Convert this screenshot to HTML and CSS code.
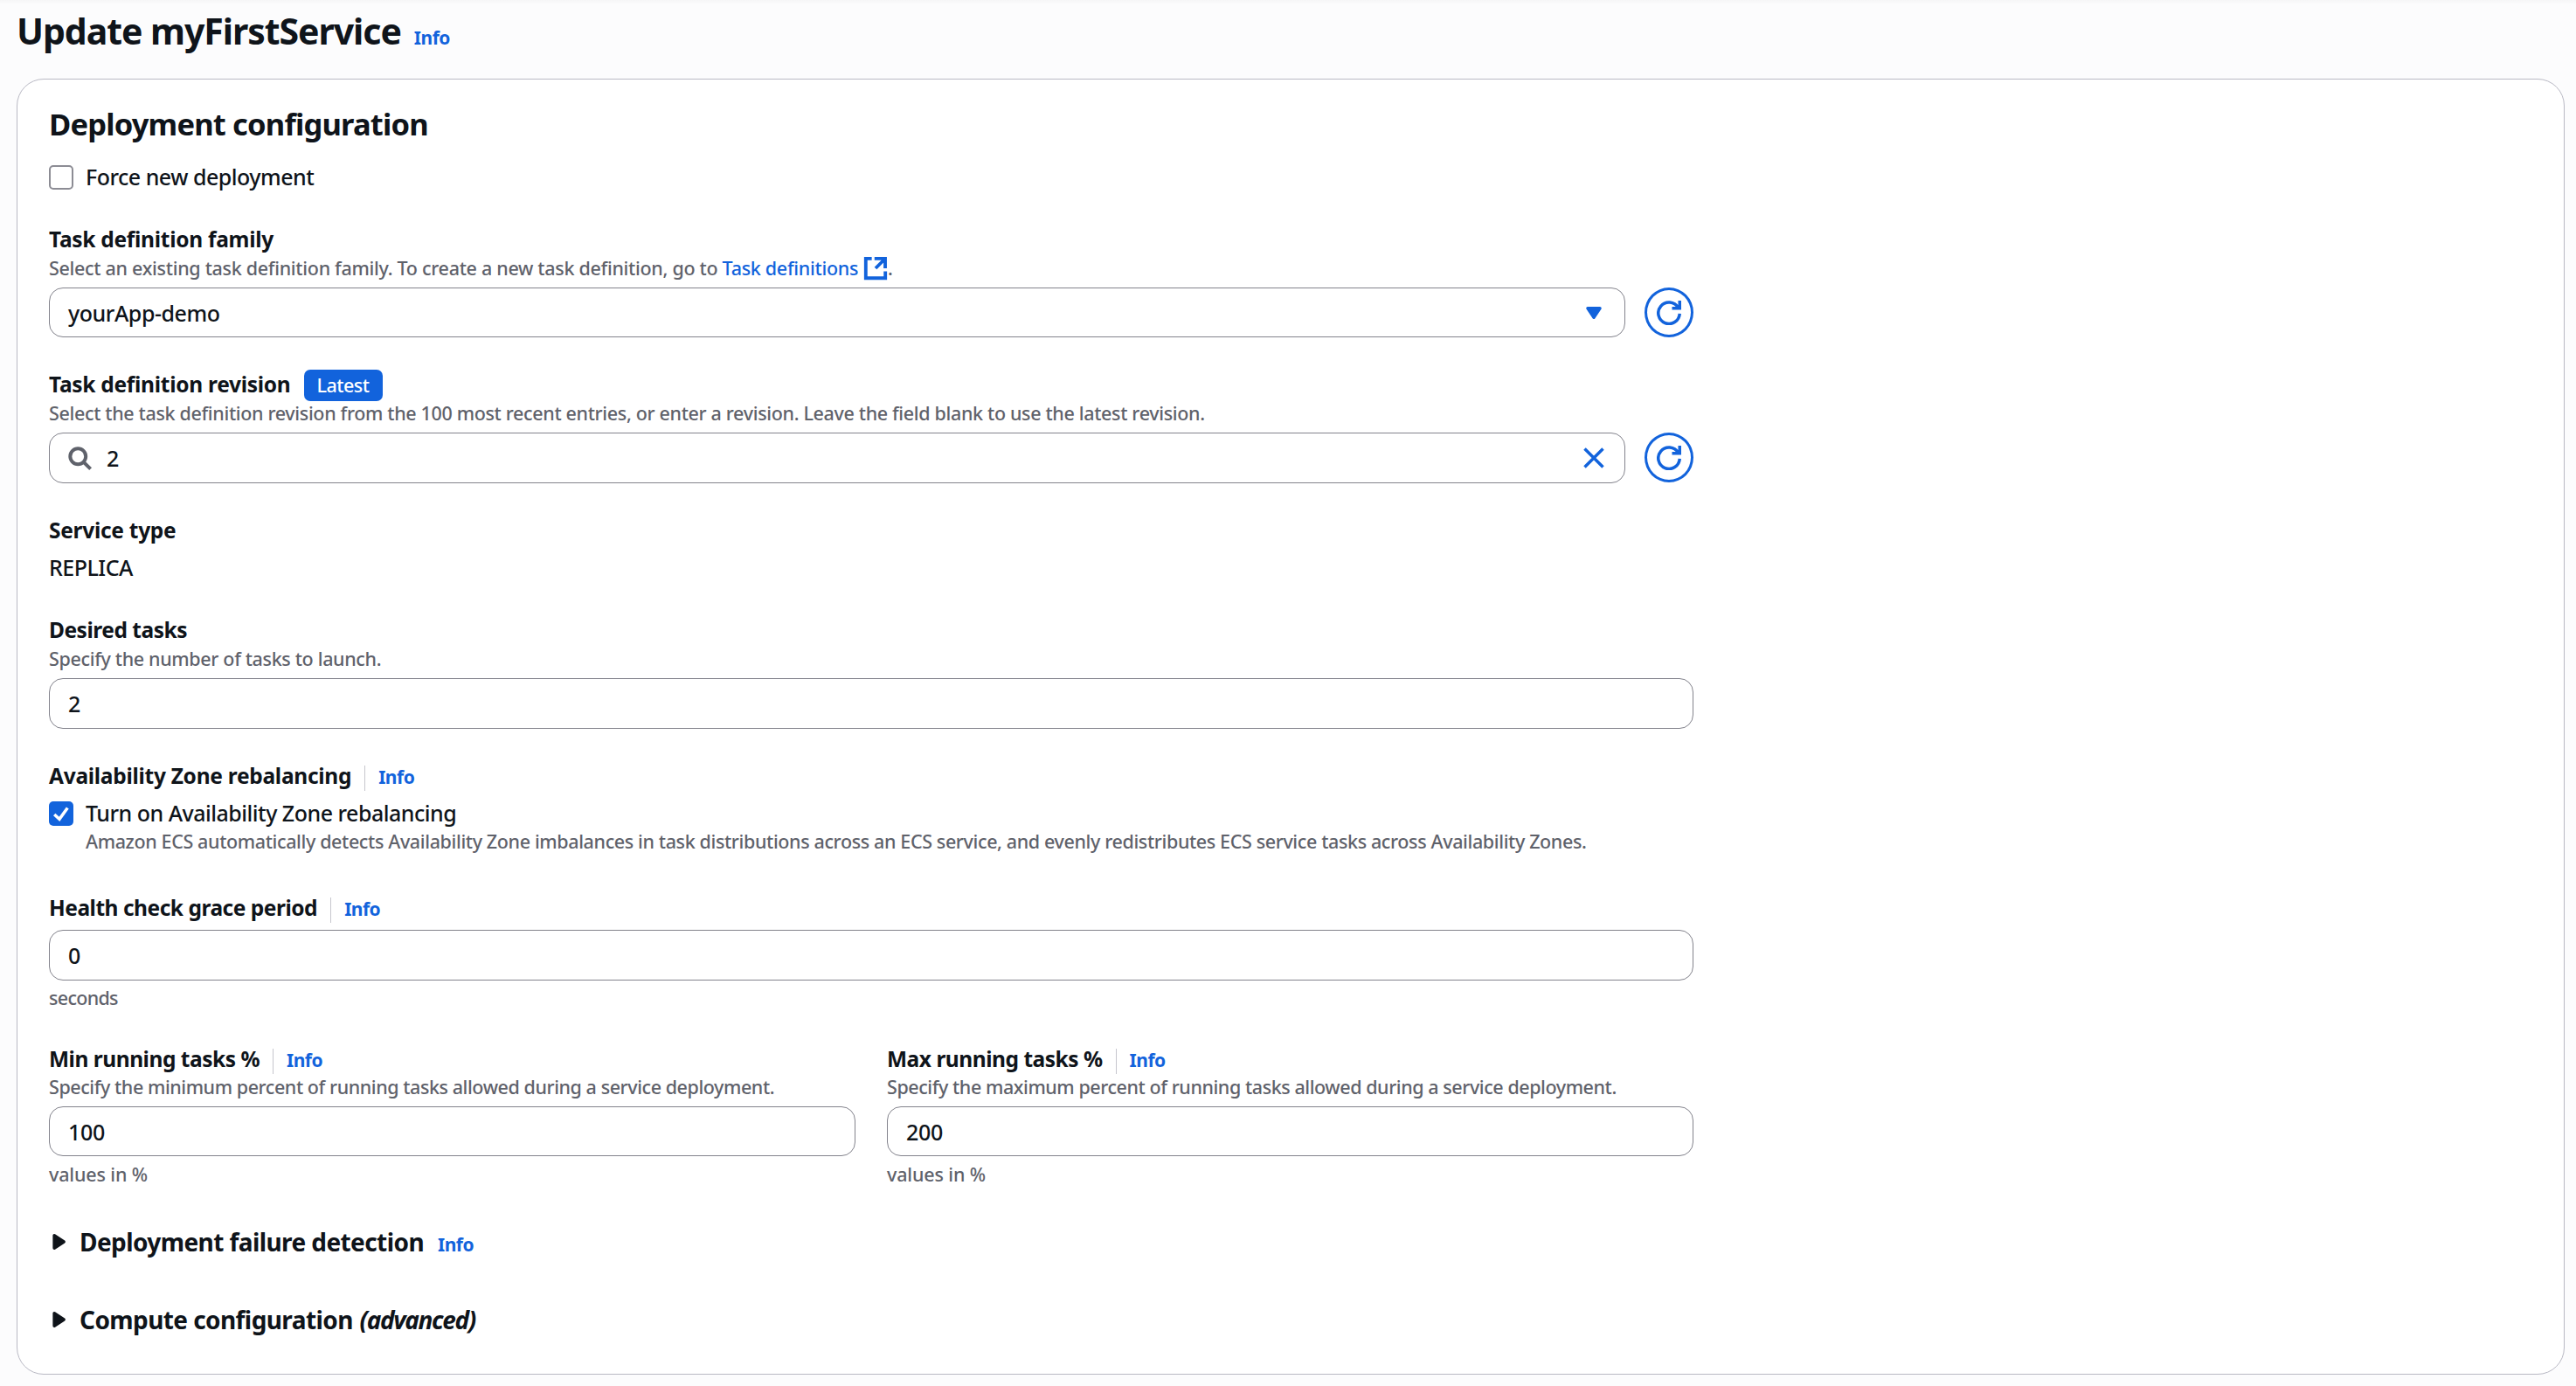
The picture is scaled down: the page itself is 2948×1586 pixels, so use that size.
FILE: index.html
```html
<!DOCTYPE html>
<html lang="en">
<head>
<meta charset="utf-8">
<title>Update myFirstService</title>
<link rel="stylesheet" href="styles.css">
</head>
<body>
<svg class="sprite" aria-hidden="true">
  <symbol id="refresh" viewBox="0 0 16 16"><path d="M10 5h5V0M15 8.5A7 7 0 1 1 14 4.5" /></symbol>
  <symbol id="arrow" viewBox="0 0 16 16"><path class="solid" d="M3.5 3.9v8.2l6.3-4.1z"/></symbol>
</svg>
<header class="page-header">
  <h1>Update myFirstService</h1>
  <a class="info">Info</a>
</header>
<main class="card">
  <h2>Deployment configuration</h2>
  <div class="check-row force"><span class="checkbox"></span><span class="text">Force new deployment</span></div>

  <section class="group family">
    <div class="label">Task definition family</div>
    <div class="hint">Select an existing task definition family. To create a new task definition, go to <a class="link">Task definitions</a><svg class="icon external" viewBox="0 0 16 16"><path d="M5.5 1.6H1.6v12.8h12.8V10M7.3 1.6h7v6.4M14 2L8 8"/></svg>.</div>
    <div class="field-row">
      <div class="field short"><span class="value name">yourApp-demo</span><svg class="icon caret" viewBox="0 0 16 16"><path class="solid" d="M4 5h8l-4 6z"/></svg></div>
      <button class="refresh"><svg class="icon"><use href="#refresh"/></svg></button>
    </div>
  </section>

  <section class="group revision">
    <div class="label">Task definition revision<span class="badge">Latest</span></div>
    <div class="hint">Select the task definition revision from the 100 most recent entries, or enter a revision. Leave the field blank to use the latest revision.</div>
    <div class="field-row">
      <div class="field search"><svg class="icon lens" viewBox="0 0 16 16"><circle cx="7" cy="7" r="5.1"/><path d="M10.6 10.6L15.2 15.2"/></svg><span class="value">2</span><svg class="icon clear" viewBox="0 0 16 16"><path d="M2 2l12 12M14 2L2 14"/></svg></div>
      <button class="refresh"><svg class="icon"><use href="#refresh"/></svg></button>
    </div>
  </section>

  <section class="group service">
    <div class="label">Service type</div>
    <div class="text plain">REPLICA</div>
  </section>

  <section class="group desired">
    <div class="label">Desired tasks</div>
    <div class="hint">Specify the number of tasks to launch.</div>
    <div class="field"><span class="value">2</span></div>
  </section>

  <section class="group zones">
    <div class="label">Availability Zone rebalancing<a class="info divided">Info</a></div>
    <div class="check-row"><span class="checkbox checked"><svg viewBox="0 0 28 28"><path d="M6.2 15L12 20.3L21.3 7.4"/></svg></span><span class="text">Turn on Availability Zone rebalancing</span></div>
    <div class="hint indented">Amazon ECS automatically detects Availability Zone imbalances in task distributions across an ECS service, and evenly redistributes ECS service tasks across Availability Zones.</div>
  </section>

  <section class="group health">
    <div class="label">Health check grace period<a class="info divided">Info</a></div>
    <div class="field"><span class="value">0</span></div>
    <div class="hint below">seconds</div>
  </section>

  <div class="columns">
    <section class="percent">
      <div class="label">Min running tasks %<a class="info divided">Info</a></div>
      <div class="hint">Specify the minimum percent of running tasks allowed during a service deployment.</div>
      <div class="field short"><span class="value">100</span></div>
      <div class="hint below">values in %</div>
    </section>
    <section class="percent">
      <div class="label">Max running tasks %<a class="info divided">Info</a></div>
      <div class="hint">Specify the maximum percent of running tasks allowed during a service deployment.</div>
      <div class="field short"><span class="value">200</span></div>
      <div class="hint below">values in %</div>
    </section>
  </div>

  <div class="expander failure"><svg class="icon"><use href="#arrow"/></svg><h3>Deployment failure detection</h3><a class="info">Info</a></div>
  <div class="expander compute"><svg class="icon"><use href="#arrow"/></svg><h3>Compute configuration <em>(advanced)</em></h3></div>
</main>
</body>
</html>
```

FILE: styles.css
```css
:root {
  --ink: #0f141a;
  --muted: #5f626b;
  --blue: #1263dc;
  --border: #83838c;
}
* { box-sizing: border-box; }
body {
  margin: 0;
  height: 1586px;
  background: #fcfcfd;
  color: var(--ink);
  font-family: "Noto Sans", "Open Sans", sans-serif;
  overflow: hidden;
}
h1, h2, h3 { margin: 0; font-weight: 700; white-space: nowrap; }
.sprite { display: none; }

.page-header {
  display: flex;
  align-items: baseline;
  height: 90px;
  padding: 5px 19px 0;
  background: linear-gradient(#f6f6f7, #fcfcfd 5px);
}
h1 { font-size: 41px; line-height: 60px; letter-spacing: -1.05px; }
.page-header .info { margin-left: 15px; }
.info {
  color: var(--blue);
  font-size: 21px;
  font-weight: 700;
  letter-spacing: -0.5px;
}

.card {
  width: 2916px;
  height: 1483px;
  margin-left: 19px;
  padding: 27px 36px 0;
  border: 1px solid #b9b9c4;
  border-radius: 31px;
  background: #fff;
}
h2 { font-size: 34.5px; line-height: 48px; letter-spacing: -0.82px; }

.group, .columns { width: 1882px; }
.label {
  display: flex;
  align-items: baseline;
  height: 32px;
  font-size: 24.5px;
  font-weight: 700;
  line-height: 32px;
  letter-spacing: -0.28px;
  white-space: nowrap;
}
.health .label, .percent .label, .desired .label { letter-spacing: -0.48px; }
.info.divided {
  height: 29px;
  margin-left: 15px;
  padding-left: 15px;
  border-left: 1px solid #c6c6cd;
  line-height: 26px;
}
.badge {
  height: 36px;
  margin: -1px 0 -3px 15px;
  padding: 0 15px;
  border-radius: 7px;
  background: var(--blue);
  color: #fff;
  font-size: 21.5px;
  font-weight: 500;
  line-height: 36px;
  letter-spacing: -0.5px;
}
.hint {
  color: var(--muted);
  font-size: 21.5px;
  font-weight: 500;
  line-height: 34px;
  height: 34px;
  letter-spacing: -0.34px;
  white-space: nowrap;
}
.hint + .field, .hint + .field-row { margin-top: 5px; }
.family .hint { letter-spacing: -0.3px; }
.hint.indented { margin: -1px 0 0 42px; letter-spacing: -0.375px; }
.link { color: var(--blue); }

.icon {
  width: 28px;
  height: 28px;
  flex: none;
  overflow: visible;
  fill: none;
  stroke: currentColor;
  stroke-width: 2;
}
.solid { fill: currentColor; stroke-linejoin: round; }
.icon.external {
  margin: 0 0 0 6px;
  vertical-align: -6px;
  color: var(--blue);
  stroke-width: 2.2;
}

.field-row { display: flex; gap: 22px; }
.field-row .field { width: 1804px; }
.field {
  display: flex;
  align-items: center;
  height: 58px;
  padding: 0 21px;
  border: 1px solid var(--border);
  border-radius: 16px;
  background: #fff;
}
.field.short { height: 57px; }
.value, .text {
  font-size: 25px;
  font-weight: 500;
  line-height: 34px;
  letter-spacing: -0.5px;
  white-space: nowrap;
}
.value { flex: 1; letter-spacing: -0.3px; }
.value.name { letter-spacing: -0.45px; }
.caret, .clear { color: var(--blue); }
.lens {
  margin: 0 17px 0 -1px;
  color: var(--muted);
  stroke-width: 2.3;
}
.refresh {
  display: grid;
  place-items: center;
  width: 56px;
  height: 57px;
  padding: 0;
  border: 3px solid var(--blue);
  border-radius: 50%;
  background: #fff;
  color: var(--blue);
}

.check-row { display: flex; gap: 14px; }
.checkbox {
  width: 28px;
  height: 28px;
  margin-top: 4px;
  border: 2px solid #8c8c94;
  border-radius: 5px;
}
.checkbox.checked { border: 0; background: var(--blue); }
.checked svg { display: block; fill: none; stroke: #fff; stroke-width: 3.5; }

.force { margin-top: 19px; }
.family { margin-top: 39px; }
.revision, .service, .zones { margin-top: 38px; }
.service .plain { margin-top: 9px; }
.desired { margin-top: 39px; }
.zones .check-row { margin-top: 9px; }
.health { margin-top: 43px; }
.health .field { margin-top: 9px; }
.health .below { margin-top: 3px; letter-spacing: -0.7px; }

.columns {
  display: grid;
  grid-template-columns: 1fr 1fr;
  gap: 36px;
  margin-top: 37px;
}
.percent .label + .hint { margin-top: -1px; letter-spacing: -0.43px; }
.percent .below { margin-top: 4px; letter-spacing: -0.15px; }

.expander { display: flex; align-items: baseline; height: 40px; }
.expander .icon { align-self: center; margin-right: 7px; }
.expander h3 { font-size: 28px; line-height: 40px; letter-spacing: -0.58px; }
.expander em { margin-left: 1px; letter-spacing: -1.35px; }
.expander .info { margin-left: 16px; }
.failure { margin-top: 40px; }
.compute { margin-top: 49px; }
```
